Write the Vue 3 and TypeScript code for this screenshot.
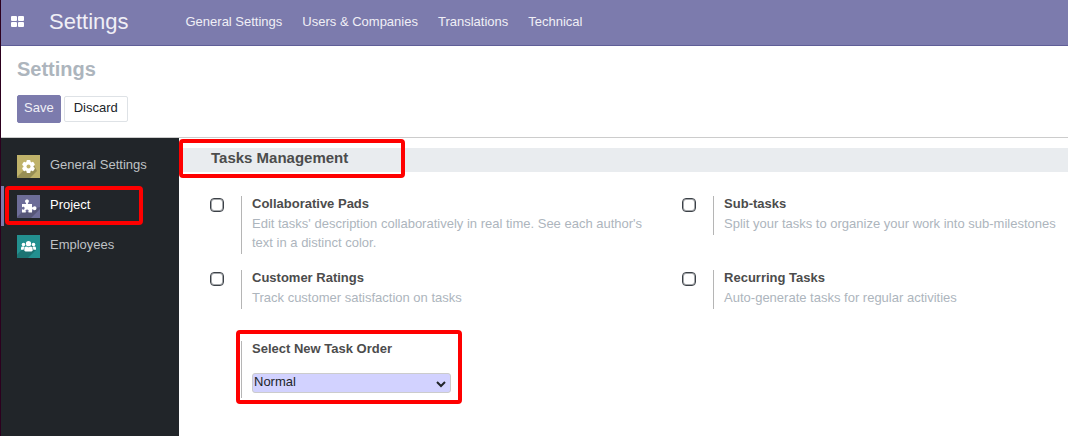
<script setup lang="ts">
import { reactive, ref } from 'vue'

interface Setting {
  id: string
  title: string
  text: string
  on: boolean
}

const menus: string[] = ['General Settings', 'Users & Companies', 'Translations', 'Technical']

const settings = reactive<Setting[]>([
  { id: 'pads', title: 'Collaborative Pads', text: "Edit tasks' description collaboratively in real time. See each author's text in a distinct color.", on: false },
  { id: 'subtasks', title: 'Sub-tasks', text: 'Split your tasks to organize your work into sub-milestones', on: false },
  { id: 'ratings', title: 'Customer Ratings', text: 'Track customer satisfaction on tasks', on: false },
  { id: 'recurring', title: 'Recurring Tasks', text: 'Auto-generate tasks for regular activities', on: false },
])

const order = ref('Normal')
</script>

<template>
  <div class="page">
    <header class="navbar">
      <button class="apps" type="button" aria-label="Applications">
        <svg width="13" height="11" viewBox="0 0 13 11">
          <rect width="6" height="5" rx="1" />
          <rect x="7" width="6" height="5" rx="1" />
          <rect y="6" width="6" height="5" rx="1" />
          <rect x="7" y="6" width="6" height="5" rx="1" />
        </svg>
      </button>
      <a class="brand" href="#">Settings</a>
      <nav class="menus">
        <a v-for="m in menus" :key="m" href="#">{{ m }}</a>
      </nav>
    </header>

    <section class="control">
      <h1>Settings</h1>
      <div class="buttons">
        <button class="btn save" type="button">Save</button>
        <button class="btn discard" type="button">Discard</button>
      </div>
    </section>

    <div class="body">
      <aside class="sidebar">
        <a class="tab" href="#">
          <svg class="icon" viewBox="0 0 23 23">
            <rect class="gold" width="23" height="23" />
            <path class="shade" d="M6.500 15.500 0 22v1h13l7-7-4-8z" />
            <g class="white">
              <circle cx="11.500" cy="11.500" r="5" />
              <rect x="9.500" y="5" width="4" height="13" rx="1" />
              <rect x="9.500" y="5" width="4" height="13" rx="1" transform="rotate(60 11.500 11.500)" />
              <rect x="9.500" y="5" width="4" height="13" rx="1" transform="rotate(120 11.500 11.500)" />
            </g>
            <circle class="hole" cx="11.500" cy="11.500" r="2" />
          </svg>
          <span>General Settings</span>
        </a>
        <a class="tab active" href="#">
          <svg class="icon" viewBox="0 0 23 23">
            <rect class="violet" width="23" height="23" />
            <path class="shade" d="M5 17 0 22v1h14l9-9v-2l-4 1-4 4z" />
            <path class="white" d="M5 9h3.600c.6 0 .7-.5.3-1C7.200 6.200 8.300 4.500 10 4.500s2.800 1.700 1.100 3.500c-.4.5-.3 1 .3 1H15v2.700c0 .6.500.7 1 .3 1.600-1.500 3.500-.6 3.500 1.200s-1.900 2.700-3.500 1.200c-.5-.4-1-.3-1 .3V17.500h-3.200c-.6 0-.7-.4-.4-.9.700-1.100.1-2.100-1.300-2.100s-2 1-1.300 2.100c.3.500.2.900-.4.900H5v-2.700c0-.5.400-.6.800-.3 1 .6 1.800 0 1.800-1.200s-.8-1.800-1.800-1.200c-.4.300-.8.200-.8-.3z" />
          </svg>
          <span>Project</span>
          <i class="mark"></i>
        </a>
        <a class="tab" href="#">
          <svg class="icon" viewBox="0 0 23 23">
            <rect class="teal" width="23" height="23" />
            <path class="shade" d="M4 15.500 0 19.500V23h11l8-8-3-5z" />
            <g class="white">
              <circle cx="6.500" cy="9.600" r="1.800" />
              <circle cx="16.500" cy="9.600" r="1.800" />
              <circle cx="11.500" cy="8.700" r="2.600" />
              <path d="M4 14.800v-1.500C4 11.900 4.800 11.400 6 11.600l1.800.3c-.8.800-1.200 1.700-1.200 2.900z" />
              <path d="M19 14.800v-1.500c0-1.400-.8-1.900-2-1.700l-1.800.3c.8.800 1.200 1.700 1.200 2.900z" />
              <path d="M7.300 15.100c0-2.200.7-3.500 2-3.500 1.500 1 2.900 1 4.400 0 1.300 0 2 1.300 2 3.500 0 1-.5 1.400-1.300 1.400H8.600c-.8 0-1.300-.4-1.300-1.400z" />
            </g>
          </svg>
          <span>Employees</span>
        </a>
      </aside>

      <main class="content">
        <h2 class="bar">Tasks Management<i class="mark"></i></h2>
        <div class="grid">
          <div v-for="s in settings" :key="s.id" class="setting">
            <input :id="s.id" v-model="s.on" type="checkbox" />
            <div class="pane">
              <label :for="s.id">{{ s.title }}</label>
              <p>{{ s.text }}</p>
            </div>
          </div>
          <div class="setting order">
            <div class="pane">
              <label for="order">Select New Task Order</label>
              <div class="select">
                <select id="order" v-model="order">
                  <option>Normal</option>
                  <option>Reverse</option>
                </select>
                <svg width="10" height="7" viewBox="0 0 10 7"><path d="M1 1l4 4 4-4" /></svg>
              </div>
              <i class="mark"></i>
            </div>
          </div>
        </div>
      </main>
    </div>
  </div>
</template>

<style>
body {
  margin: 0;
}
</style>

<style scoped>
.page {
  box-sizing: border-box;
  min-height: 100vh;
  display: flex;
  flex-direction: column;
  border-left: 1px solid #2c001e;
  background: #fff;
  color: #4c4c4c;
  font: 13px/20px "Liberation Sans", Arial, sans-serif;
}
a {
  color: inherit;
  text-decoration: none;
}
button {
  font: inherit;
  cursor: pointer;
}
.navbar {
  display: flex;
  align-items: center;
  height: 45px;
  border-bottom: 1px solid #5f5e97;
  background: #7c7bad;
  color: #f0eff6;
}
.apps {
  display: flex;
  padding: 0;
  margin: 0 25px 3px 10px;
  border: 0;
  background: none;
}
.apps svg {
  fill: #fff;
}
.brand {
  margin-right: 57px;
  padding-bottom: 2px;
  font-size: 22px;
  line-height: 28px;
}
.menus {
  display: flex;
  gap: 20px;
  padding-bottom: 2px;
}
.control {
  padding: 11px 16px 14px;
  border-bottom: 1px solid #ccc;
}
h1 {
  margin: 0 0 14px;
  color: #adb5bd;
  font-size: 20px;
  line-height: 24px;
}
.buttons {
  display: flex;
  align-items: center;
  gap: 3px;
}
.btn {
  box-sizing: border-box;
  border: 1px solid #dee2e6;
  border-radius: 2px;
}
.save {
  height: 28px;
  padding: 0 6px 2px;
  border-color: #7c7bad;
  background: #7c7bad;
  color: #f0eff6;
}
.discard {
  height: 26px;
  padding: 0 9px 2px;
  background: #fff;
  color: #212529;
}
.body {
  flex: 1;
  display: flex;
}
.sidebar {
  flex: none;
  box-sizing: border-box;
  width: 178px;
  padding-top: 8px;
  background: #212529;
  color: #bfc2c5;
}
.tab {
  position: relative;
  display: flex;
  align-items: center;
  gap: 10px;
  height: 40px;
  padding-left: 16px;
}
.tab span {
  padding-bottom: 3px;
}
.active {
  padding-left: 13px;
  border-left: 3px solid #7c7bad;
  color: #fff;
}
.icon {
  width: 23px;
  height: 23px;
}
.gold, .hole { fill: #bfb26a; }
.violet { fill: #6d6d98; }
.teal { fill: #23908f; }
.shade { fill: #000; opacity: 0.2; }
.white { fill: #fff; }
.mark {
  position: absolute;
  box-sizing: border-box;
  border: 4px solid #f00;
  border-radius: 4px;
  pointer-events: none;
}
.tab .mark {
  inset: 0 36px 1px 1px;
}
.content {
  flex: 1;
  min-width: 0;
  padding-top: 10px;
}
.bar {
  position: relative;
  margin: 0;
  padding: 0 32px 4px;
  background: #e9ecef;
  font-size: 15px;
  line-height: 20px;
}
.bar .mark {
  top: -9px;
  bottom: -6px;
  left: 0;
  width: 226px;
}
.grid {
  display: grid;
  grid-template-columns: 13fr 11fr;
  gap: 16px;
  padding: 24px 0 32px 31px;
}
.setting {
  display: flex;
  align-items: flex-start;
}
.setting input {
  flex: none;
  appearance: none;
  box-sizing: border-box;
  width: 14px;
  height: 14px;
  margin: 2px 17px 0 0;
  border: 1px solid #3c4147;
  border-radius: 4px;
  background: #fff;
  box-shadow: inset 0 0 0 1px #a5a8ab;
}
.setting input:checked {
  background: #7c7bad;
}
.pane {
  padding: 0 0 2px 10px;
  border-left: 1px solid #b5b5b5;
}
.pane label {
  display: block;
  margin-top: -2px;
  font-weight: bold;
}
.pane p {
  margin: 0;
  color: #adb5bd;
  line-height: 19px;
}
.order {
  margin: 16px 0 0 31px;
}
.order .pane {
  position: relative;
  box-sizing: border-box;
  min-height: 57px;
}
.order .mark {
  inset: -11px 0 -6px -6px;
  width: 226px;
}
.select {
  position: relative;
  width: 199px;
  margin-top: 14px;
}
select {
  display: block;
  box-sizing: border-box;
  appearance: none;
  width: 100%;
  height: 20px;
  padding: 0 20px 2px 1px;
  border: 1px solid #ccc;
  border-radius: 3px;
  background: #d2d2ff;
  color: #212529;
  font: inherit;
  line-height: 16px;
}
.select svg {
  position: absolute;
  top: 8px;
  right: 5px;
  fill: none;
  stroke: #212529;
  stroke-width: 2;
  pointer-events: none;
}
</style>
